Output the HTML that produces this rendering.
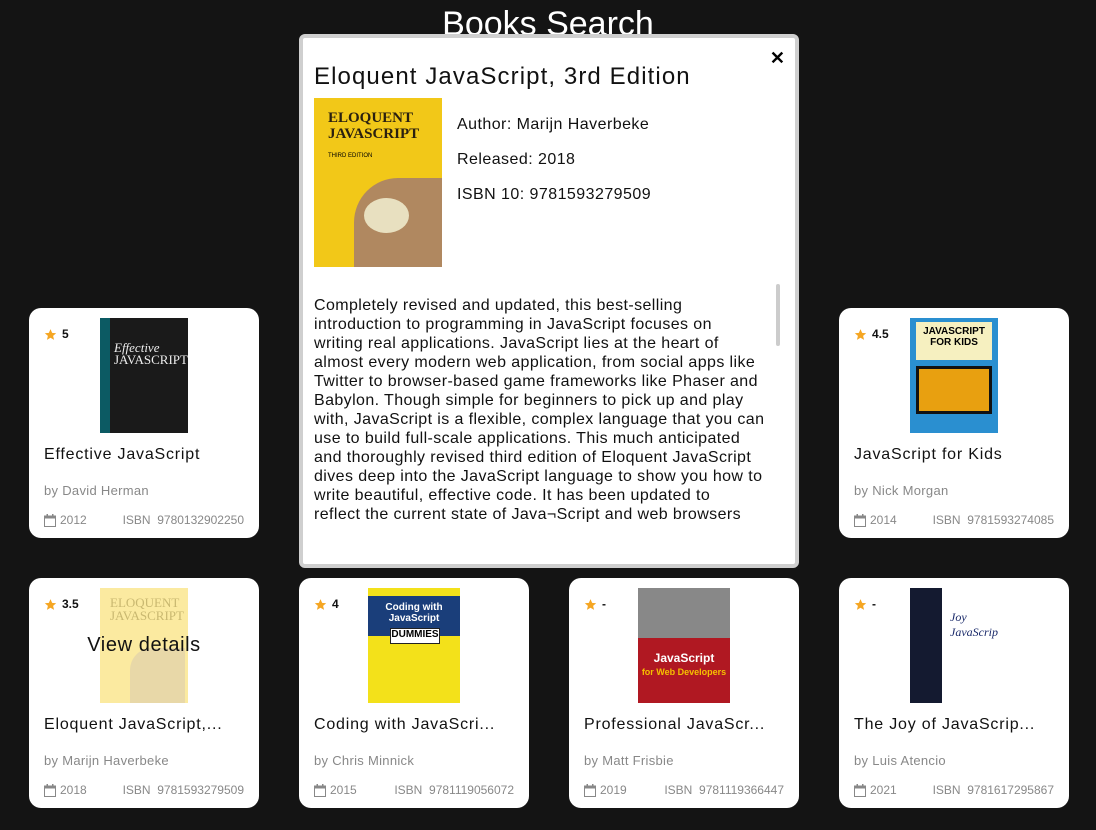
<!DOCTYPE html>
<html><head><meta charset="utf-8"><style>
*{margin:0;padding:0;box-sizing:border-box}
body{width:1096px;height:830px;background:#141414;font-family:"Liberation Sans",sans-serif;position:relative;overflow:hidden}
h1{position:absolute;top:4px;left:0;width:1096px;text-align:center;color:#fff;font-weight:400;font-size:34px;line-height:40px}
.card{position:absolute;width:230px;height:230px;background:#fff;border-radius:12px}
.rate{position:absolute;left:15px;top:19px;font-size:12px;font-weight:bold;color:#111;display:flex;align-items:center;gap:5px}
.star{width:13px;height:13px}
.cover{position:absolute;left:71px;top:10px;width:88px;height:115px;overflow:hidden}
.t{position:absolute;left:15px;top:138px;font-size:16px;color:#111;white-space:nowrap;letter-spacing:.8px}
.a{position:absolute;left:15px;top:175px;font-size:13px;color:#888;letter-spacing:.3px}
.b{position:absolute;left:15px;top:205px;font-size:12px;color:#888;width:200px;display:flex;align-items:center}
.b .y{margin-left:4px}
.b .i{margin-left:auto}
.cal{width:12px;height:13px}
.modal{position:absolute;left:299px;top:34px;width:500px;height:534px;background:#fff;border:4px solid #cfcfcf;border-radius:6px}
.mt{position:absolute;left:11px;top:25px;font-size:24px;color:#111;letter-spacing:1.1px}
.x{position:absolute;right:10px;top:10px;font-size:18px;font-weight:bold}
.mc{position:absolute;left:11px;top:60px;width:128px;height:169px;background:#f2c818;overflow:hidden}
.info{position:absolute;left:154px;top:69px;font-size:16px;color:#111;line-height:35px;letter-spacing:.45px}
.desc{position:absolute;left:11px;top:258px;width:470px;font-size:16px;line-height:19px;color:#111;height:226px;overflow:hidden;letter-spacing:.4px;white-space:nowrap}
.sb{position:absolute;left:473px;top:246px;width:4px;height:62px;background:#ccc;border-radius:2px}
</style></head><body>
<h1>Books Search</h1>

<div class="card" style="left:29px;top:308px">
<div class="rate"><svg class="star" viewBox="0 0 24 24"><path fill="#f5a623" d="M12 2l3 7 7.5.6-5.7 5 1.8 7.4L12 18l-6.6 4 1.8-7.4-5.7-5L9 9z"/></svg>5</div>
<div class="cover" style="background:#1a1a1a"><div style="position:absolute;left:0;top:0;width:10px;height:115px;background:#0c5a63"></div><div style="position:absolute;left:14px;top:24px;color:#eee;font-style:italic;font-family:'Liberation Serif';font-size:13px;line-height:12px">Effective<br><span style="font-style:normal">JAVASCRIPT</span></div></div>
<div class="t">Effective JavaScript</div><div class="a">by David Herman</div>
<div class="b"><svg class="cal" viewBox="0 0 12 13"><rect x="0.5" y="2" width="11" height="10.5" fill="none" stroke="#888"/><rect x="0.5" y="2" width="11" height="2.5" fill="#888"/><rect x="2.5" y="0" width="1.5" height="3" fill="#888"/><rect x="8" y="0" width="1.5" height="3" fill="#888"/></svg><span class="y">2012</span><span class="i">ISBN&nbsp; 9780132902250</span></div>
</div>

<div class="card" style="left:839px;top:308px">
<div class="rate"><svg class="star" viewBox="0 0 24 24"><path fill="#f5a623" d="M12 2l3 7 7.5.6-5.7 5 1.8 7.4L12 18l-6.6 4 1.8-7.4-5.7-5L9 9z"/></svg>4.5</div>
<div class="cover" style="background:#2a8fd0"><div style="position:absolute;left:6px;top:4px;width:76px;height:38px;background:#f6f0c0;font-size:10px;font-weight:bold;text-align:center;padding-top:4px">JAVASCRIPT<br>FOR KIDS</div><div style="position:absolute;left:6px;top:48px;width:76px;height:48px;background:#e8a010;border:3px solid #111"></div></div>
<div class="t">JavaScript for Kids</div><div class="a">by Nick Morgan</div>
<div class="b"><svg class="cal" viewBox="0 0 12 13"><rect x="0.5" y="2" width="11" height="10.5" fill="none" stroke="#888"/><rect x="0.5" y="2" width="11" height="2.5" fill="#888"/><rect x="2.5" y="0" width="1.5" height="3" fill="#888"/><rect x="8" y="0" width="1.5" height="3" fill="#888"/></svg><span class="y">2014</span><span class="i">ISBN&nbsp; 9781593274085</span></div>
</div>

<div class="card" style="left:29px;top:578px">
<div class="rate"><svg class="star" viewBox="0 0 24 24"><path fill="#f5a623" d="M12 2l3 7 7.5.6-5.7 5 1.8 7.4L12 18l-6.6 4 1.8-7.4-5.7-5L9 9z"/></svg>3.5</div>
<div class="cover" style="background:#fbeaa0"><div style="position:absolute;left:10px;top:8px;color:#c9b870;font-family:'Liberation Serif';font-size:13px;line-height:13px">ELOQUENT<br>JAVASCRIPT</div><div style="position:absolute;left:30px;top:60px;width:55px;height:55px;background:#e8d8a8;border-radius:40% 0 0 0"></div></div>
<div style="position:absolute;left:0;top:56px;width:230px;text-align:center;font-size:20px;color:#111;letter-spacing:.6px">View details</div>
<div class="t">Eloquent JavaScript,...</div><div class="a">by Marijn Haverbeke</div>
<div class="b"><svg class="cal" viewBox="0 0 12 13"><rect x="0.5" y="2" width="11" height="10.5" fill="none" stroke="#888"/><rect x="0.5" y="2" width="11" height="2.5" fill="#888"/><rect x="2.5" y="0" width="1.5" height="3" fill="#888"/><rect x="8" y="0" width="1.5" height="3" fill="#888"/></svg><span class="y">2018</span><span class="i">ISBN&nbsp; 9781593279509</span></div>
</div>

<div class="card" style="left:299px;top:578px">
<div class="rate"><svg class="star" viewBox="0 0 24 24"><path fill="#f5a623" d="M12 2l3 7 7.5.6-5.7 5 1.8 7.4L12 18l-6.6 4 1.8-7.4-5.7-5L9 9z"/></svg>4</div>
<div class="cover" style="left:69px;width:92px;background:#f3e11a"><div style="position:absolute;left:0;top:8px;width:92px;height:40px;background:#1a3e7a;color:#fff;font-size:10px;font-weight:bold;text-align:center;padding-top:6px">Coding with<br>JavaScript</div><div style="position:absolute;left:22px;top:40px;width:50px;height:16px;background:#fff;border:1px solid #222;font-size:10px;text-align:center;font-weight:bold">DUMMIES</div></div>
<div class="t">Coding with JavaScri...</div><div class="a">by Chris Minnick</div>
<div class="b"><svg class="cal" viewBox="0 0 12 13"><rect x="0.5" y="2" width="11" height="10.5" fill="none" stroke="#888"/><rect x="0.5" y="2" width="11" height="2.5" fill="#888"/><rect x="2.5" y="0" width="1.5" height="3" fill="#888"/><rect x="8" y="0" width="1.5" height="3" fill="#888"/></svg><span class="y">2015</span><span class="i">ISBN&nbsp; 9781119056072</span></div>
</div>

<div class="card" style="left:569px;top:578px">
<div class="rate"><svg class="star" viewBox="0 0 24 24"><path fill="#f5a623" d="M12 2l3 7 7.5.6-5.7 5 1.8 7.4L12 18l-6.6 4 1.8-7.4-5.7-5L9 9z"/></svg>-</div>
<div class="cover" style="left:69px;width:92px;background:#888"><div style="position:absolute;left:0;top:50px;width:92px;height:65px;background:#b01822;color:#fff;font-size:12px;font-weight:bold;text-align:center;padding-top:14px;line-height:13px">JavaScript<br><span style="font-size:9px;color:#f5c000">for Web Developers</span></div></div>
<div class="t">Professional JavaScr...</div><div class="a">by Matt Frisbie</div>
<div class="b"><svg class="cal" viewBox="0 0 12 13"><rect x="0.5" y="2" width="11" height="10.5" fill="none" stroke="#888"/><rect x="0.5" y="2" width="11" height="2.5" fill="#888"/><rect x="2.5" y="0" width="1.5" height="3" fill="#888"/><rect x="8" y="0" width="1.5" height="3" fill="#888"/></svg><span class="y">2019</span><span class="i">ISBN&nbsp; 9781119366447</span></div>
</div>

<div class="card" style="left:839px;top:578px">
<div class="rate"><svg class="star" viewBox="0 0 24 24"><path fill="#f5a623" d="M12 2l3 7 7.5.6-5.7 5 1.8 7.4L12 18l-6.6 4 1.8-7.4-5.7-5L9 9z"/></svg>-</div>
<div class="cover" style="background:#fff"><div style="position:absolute;left:0;top:0;width:32px;height:115px;background:#141a30"></div><div style="position:absolute;left:40px;top:22px;font-family:'Liberation Serif';font-size:12px;color:#1a2a6a;font-style:italic">Joy<br>JavaScript</div></div>
<div class="t">The Joy of JavaScrip...</div><div class="a">by Luis Atencio</div>
<div class="b"><svg class="cal" viewBox="0 0 12 13"><rect x="0.5" y="2" width="11" height="10.5" fill="none" stroke="#888"/><rect x="0.5" y="2" width="11" height="2.5" fill="#888"/><rect x="2.5" y="0" width="1.5" height="3" fill="#888"/><rect x="8" y="0" width="1.5" height="3" fill="#888"/></svg><span class="y">2021</span><span class="i">ISBN&nbsp; 9781617295867</span></div>
</div>

<div class="modal">
<div class="mt">Eloquent JavaScript, 3rd Edition</div>
<div class="x">✕</div>
<div class="mc"><div style="position:absolute;left:14px;top:12px;font-family:'Liberation Serif';font-weight:bold;font-size:15px;line-height:16px;color:#2a2010">ELOQUENT<br>JAVASCRIPT</div><div style="position:absolute;left:14px;top:55px;font-size:6px">THIRD EDITION</div><div style="position:absolute;left:40px;top:80px;width:88px;height:89px;background:#b08860;border-radius:50% 0 0 0"></div><div style="position:absolute;left:50px;top:100px;width:45px;height:35px;background:#e8e0c0;border-radius:50%"></div></div>
<div class="info">Author: Marijn Haverbeke<br>Released: 2018<br>ISBN 10: 9781593279509</div>
<div class="desc">Completely revised and updated, this best-selling<br>introduction to programming in JavaScript focuses on<br>writing real applications. JavaScript lies at the heart of<br>almost every modern web application, from social apps like<br>Twitter to browser-based game frameworks like Phaser and<br>Babylon. Though simple for beginners to pick up and play<br>with, JavaScript is a flexible, complex language that you can<br>use to build full-scale applications. This much anticipated<br>and thoroughly revised third edition of Eloquent JavaScript<br>dives deep into the JavaScript language to show you how to<br>write beautiful, effective code. It has been updated to<br>reflect the current state of Java¬Script and web browsers</div>
<div class="sb"></div>
</div>
</body></html>
